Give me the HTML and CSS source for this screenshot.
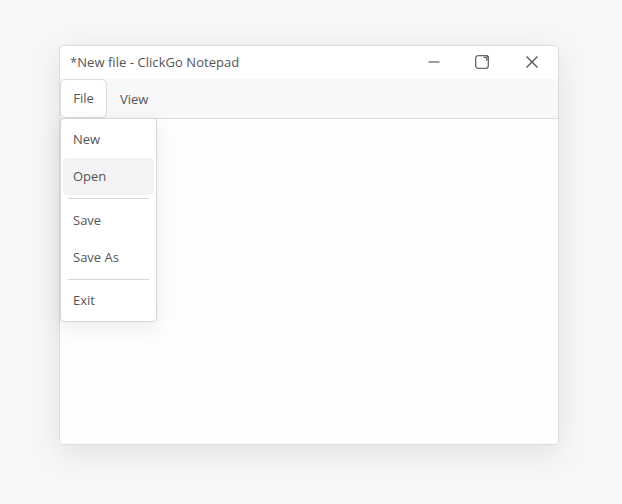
FILE: index.html
```html
<!DOCTYPE html>
<html>
<head>
<meta charset="utf-8">
<link rel="stylesheet" href="styles.css">
</head>
<body>
<div class="desktop">
  <div class="window">
    <div class="titlebar">
      <div class="title">*New file - ClickGo Notepad</div>
      <div class="controls">
        <div class="ctl">
          <svg width="14" height="14" viewBox="0 0 14 14"><path d="M1.5 7h11" stroke="#666" stroke-width="1.3" fill="none"/></svg>
        </div>
        <div class="ctl">
          <svg width="16" height="16" viewBox="0 0 16 16"><rect x="1.7" y="1.7" width="12.6" height="12.6" rx="2.5" stroke="#666" stroke-width="1.3" fill="none"/><path d="M9 1.7h3a2.3 2.3 0 0 1 2.3 2.3v3" stroke="#666" stroke-width="1.3" fill="none"/><path d="M9.5 3.5h2.5a.5.5 0 0 1 .5.5v2.5" stroke="#666" stroke-width="1.1" fill="none"/></svg>
        </div>
        <div class="ctl">
          <svg width="14" height="14" viewBox="0 0 14 14"><path d="M1.5 1.5l11 11M12.5 1.5l-11 11" stroke="#555" stroke-width="1.4" fill="none"/></svg>
        </div>
      </div>
    </div>
    <div class="menubar">
      <div class="menuitem active">File</div>
      <div class="menuitem">View</div>
    </div>
    <div class="content"></div>
    <div class="dropdown">
      <div class="dditem">New</div>
      <div class="dditem hover">Open</div>
      <div class="sep"></div>
      <div class="dditem">Save</div>
      <div class="dditem">Save As</div>
      <div class="sep sep-tight"></div>
      <div class="dditem">Exit</div>
    </div>
  </div>
</div>
</body>
</html>
```

FILE: styles.css
```css
html, body {
  margin: 0;
  padding: 0;
  background: #f7f7f7;
  font-family: "Open Sans", "Noto Sans", sans-serif;
  color: #555;
}
.desktop {
  width: 622px;
  height: 504px;
  padding: 45px 0 0 59px;
  box-sizing: border-box;
}
.window {
  position: relative;
  width: 500px;
  height: 400px;
  box-sizing: border-box;
  border: 1px solid #dcdcde;
  border-radius: 5px;
  background: #fff;
  box-shadow: 0 8px 30px rgba(0,0,0,0.09);
  display: flex;
  flex-direction: column;
}
.titlebar {
  height: 33px;
  box-sizing: border-box;
  display: flex;
  align-items: center;
  justify-content: space-between;
  padding-left: 10px;
  padding-bottom: 1px;
  border-radius: 5px 5px 0 0;
}
.title {
  font-size: 13px;
  color: #555;
  letter-spacing: 0.05px;
}
.controls {
  display: flex;
  height: 100%;
}
.ctl {
  width: 48px;
  display: flex;
  align-items: center;
  justify-content: center;
}
.ctl:last-child {
  width: 52px;
}
.menubar {
  height: 39px;
  background: #f8f8fa;
  display: flex;
  align-items: stretch;
}
.menuitem {
  font-size: 13px;
  display: flex;
  align-items: center;
  padding: 0 12px 1px;
  color: #555;
  box-sizing: border-box;
  border: 1px solid transparent;
  border-bottom: none;
}
.menuitem.active {
  background: #fff;
  border: 1px solid #dcdce0;
  border-radius: 5px;
  width: 47px;
  justify-content: center;
  padding: 0 0 1px;
}
.content {
  flex: 1;
  background: #fdfefe;
  border-top: 1px solid #dcdce0;
  border-radius: 0 0 4px 4px;
}
.dropdown {
  position: absolute;
  left: 0;
  top: 72px;
  width: 97px;
  box-sizing: border-box;
  background: #fff;
  border: 1px solid #d4d4d8;
  border-radius: 4px;
  padding: 2px 2px 2px;
  box-shadow: 0 6px 22px rgba(0,0,0,0.08);
}
.dditem {
  height: 37px;
  font-size: 13px;
  display: flex;
  align-items: center;
  padding-left: 10px;
  padding-bottom: 2px;
  box-sizing: border-box;
  border-radius: 4px;
  color: #555;
}
.dditem.hover {
  background: #f3f3f5;
}
.sep {
  height: 1px;
  background: #d8d8dc;
  margin: 3px 5px 3px 5px;
}
.sep.sep-tight {
  margin: 3px 5px 2px 5px;
}
```
